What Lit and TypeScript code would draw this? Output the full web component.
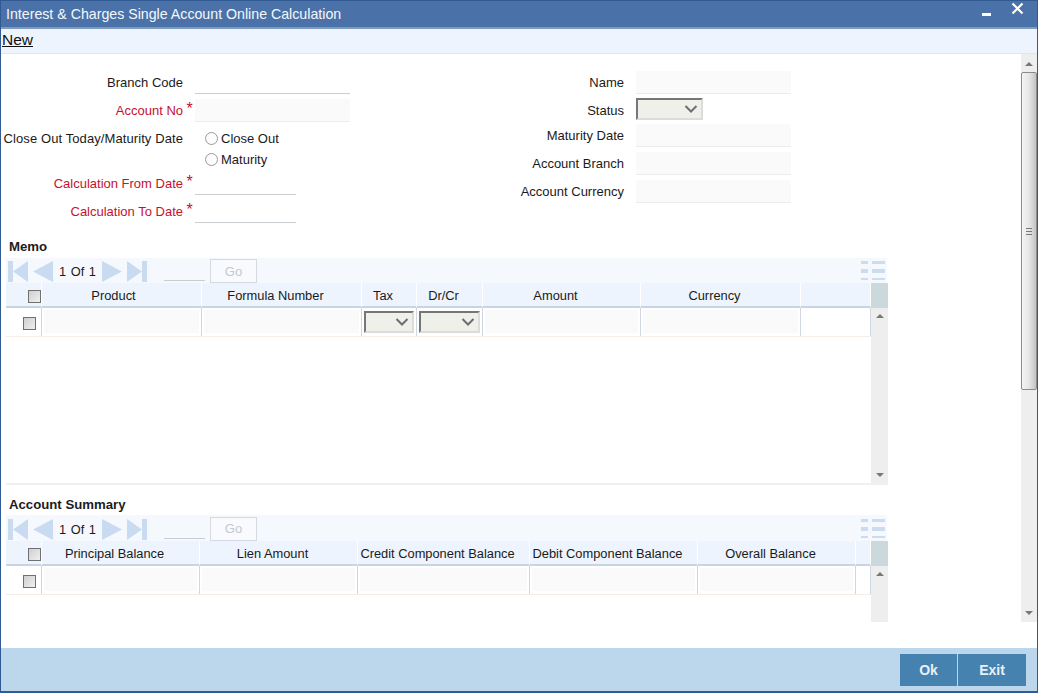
import { LitElement, html, css, svg } from "lit";
import { customElement } from "lit/decorators.js";
import { classMap } from "lit/directives/class-map.js";

type Col = { w: number; label: string; kind: "input" | "select" | "none"; shift?: boolean };

const memoCols: Col[] = [
  { w: 160, label: "Product", kind: "input", shift: true },
  { w: 160, label: "Formula Number", kind: "input" },
  { w: 55, label: "Tax", kind: "select" },
  { w: 66, label: "Dr/Cr", kind: "select" },
  { w: 158, label: "Amount", kind: "input" },
  { w: 160, label: "Currency", kind: "input" },
  { w: 70, label: "", kind: "none" },
];
const summaryCols: Col[] = [
  { w: 158, label: "Principal Balance", kind: "input" },
  { w: 158, label: "Lien Amount", kind: "input" },
  { w: 172, label: "Credit Component Balance", kind: "input" },
  { w: 168, label: "Debit Component Balance", kind: "input" },
  { w: 158, label: "Overall Balance", kind: "input" },
  { w: 15, label: "", kind: "none" },
];

const chevron = html`<svg class="chev" width="14" height="8" viewBox="0 0 14 8"><path d="M1.5 1 L7 6.5 L12.5 1" fill="none" stroke="#6e6e6e" stroke-width="2"/></svg>`;
const arrowUp = svg`<path d="M0 4 L4 0 L8 4 Z" fill="#777"/>`;
const arrowDown = svg`<path d="M0 0 L8 0 L4 4 Z" fill="#777"/>`;

@customElement("app-root")
export class AppRoot extends LitElement {
  static styles = css`
    :host { display: block; height: 100vh; font-family: "Liberation Sans", Arial, sans-serif; font-size: 13px; color: #1a1a1a; }
    * { box-sizing: border-box; }
    .window { height: 693px; display: flex; flex-direction: column; border-left: 1px solid #2f5a94; border-right: 1px solid #2f5a94; border-bottom: 2px solid #2f5a94; border-top: 1px solid #2f5a94; background: #fff; overflow: hidden; }
    .title { height: 28px; flex: none; background: #4a72a8; border-bottom: 2px solid #7f9cbd; color: #fff; display: flex; align-items: center; justify-content: space-between; padding: 0 13px 0 5px; }
    .title .text { color: #f4f7fb; font-size: 14.2px; padding-bottom: 1px; }
    .wctl { display: flex; align-items: flex-start; gap: 19px; margin-top: -8px; }
    .toolbar { height: 25px; flex: none; background: #edf4fd; border-bottom: 1px solid #e2e6ea; display: flex; align-items: center; font-size: 15.5px; padding: 0 0 3px 1px; }
    .toolbar a { color: #111; text-decoration: underline; }
    .content { height: 568px; flex: none; display: flex; overflow: hidden; }
    .main { flex: 1; min-width: 0; overflow: hidden; }
    .spacer { flex: 1; }
    .footer { height: 43px; flex: none; background: #bcd7ec; display: flex; justify-content: flex-end; padding: 6px 11px 5px 0; gap: 1px; }
    .btn { background: #4682b0; color: #e9f0f5; font-weight: bold; font-size: 14px; display: flex; align-items: center; justify-content: center; }
    .btn.ok { width: 57px; }
    .btn.exit { width: 68px; }

    .vscroll { width: 16px; flex: none; background: #eeeeee; display: flex; flex-direction: column; align-items: center; }
    .vscroll .up { height: 18px; display: flex; align-items: center; justify-content: center; flex: none; padding-top: 2px; }
    .vscroll .thumb { width: 16px; height: 318px; flex: none; border: 1px solid #8b8b8b; border-radius: 2px; background: linear-gradient(90deg, #f4f4f4, #e6e6e6 50%, #c4c4c4); display: flex; align-items: center; justify-content: center; }
    .grip { width: 6px; height: 7px; border-top: 1px solid #777; border-bottom: 1px solid #777; position: relative; }
    .grip::after { content: ""; position: absolute; left: 0; right: 0; top: 2px; height: 1px; background: #777; }
    .vscroll .dn { margin-top: auto; height: 18px; display: flex; align-items: center; justify-content: center; flex: none; }

    .form { display: flex; height: 182px; padding-top: 17px; }
    .col-left { width: 500px; flex: none; display: flex; flex-direction: column; }
    .col-right { width: 400px; flex: none; display: flex; flex-direction: column; }
    .row { display: flex; align-items: center; height: 22px; flex: none; }
    .lbl { text-align: right; white-space: nowrap; flex: none; }
    .lbl.wide { letter-spacing: 0.09px; }
    .lbl.nudge { padding-top: 2px; }
    .col-left .lbl { width: 182px; }
    .col-right .lbl { width: 123px; }
    .req { color: #c8102e; }
    .star { width: 12px; flex: none; color: #c8102e; font-size: 16px; text-align: center; line-height: 14px; margin-top: -3px; padding-left: 1px; }
    .gap { width: 12px; flex: none; }
    .in { height: 23px; flex: none; }
    .underline { border-bottom: 1px solid #c9ced3; }
    .filled { background: #fafafa; border-bottom: 1px solid #ececec; }
    .w155 { width: 155px; }
    .w101 { width: 101px; }
    .mt6 { margin-top: 6px; }
    .mt5 { margin-top: 5px; }
    .mt4 { margin-top: 4px; }
    .mt2 { margin-top: 2px; }
    .mtn1 { margin-top: -1px; }
    .radio { display: flex; align-items: center; gap: 3px; padding-left: 10px; height: 21px; }
    .radio .dot { width: 13px; height: 13px; border-radius: 50%; background: #fdfdfd; border: 1px solid #9a9a9a; flex: none; }
    .spacer-l { width: 194px; flex: none; }

    .select { height: 22px; flex: none; background: #f0f0eb; border-top: 2px solid #767676; border-left: 2px solid #767676; border-right: 2px solid #dcdcdc; border-bottom: 2px solid #dcdcdc; display: flex; align-items: center; justify-content: flex-end; padding-right: 3px; }
    .select.status { width: 67px; }
    .chev { display: block; }

    .section { margin-left: 5px; width: 882px; }
    .sec-title { font-weight: bold; font-size: 13.2px; height: 22px; display: flex; align-items: center; padding: 0 0 2px 3px; color: #1c1c1c; }
    .second .sec-title { padding-bottom: 0; }
    .pager { height: 25px; width: 881px; background: #f5f9fe; display: flex; align-items: center; padding: 1px 0 0 2px; }
    .second .pager { height: 26px; }
    .pager svg.nav { display: block; flex: none; margin-top: 1px; }
    .navgap { width: 4px; flex: none; }
    .pager .count { width: 47px; text-align: center; font-size: 12.8px; flex: none; word-spacing: 1px; padding-top: 1px; }
    .pager .pg-in { width: 41px; height: 15px; border-bottom: 1px solid #c9ced3; margin-left: 17px; flex: none; align-self: flex-end; margin-bottom: 2px; }
    .pager .go { width: 47px; height: 24px; margin-left: 5px; border: 1px solid #d3dae2; background: #f8fafd; color: #c3c9d0; font-size: 13px; display: flex; align-items: center; justify-content: center; flex: none; }
    .pager .list { margin-left: auto; margin-right: 2px; display: block; flex: none; margin-top: -1px; }

    .tablewrap { display: flex; width: 882px; height: 100%; }
    .table { width: 865px; flex: none; }
    .hrow, .drow { display: grid; }
    .hrow { height: 25px; font-size: 12.85px; }
    .hcell { background: #edf4fd; border-right: 1px solid #fff; border-bottom: 2px solid #c9d4e2; display: flex; align-items: center; justify-content: center; padding: 1px 12px 0 0; white-space: nowrap; }
    .hcell.shift { padding-right: 16px; }
    .hcell.check { padding: 3px 0 0 22px; justify-content: flex-start; }
    .drow { height: 29px; border-bottom: 1px solid #f6ede6; }
    .dcell { border-right: 1px solid #cfd8e2; padding: 2px 2px 3px 2px; display: flex; }
    .dcell.check { padding: 2px 0 0 17px; align-items: center; }
    .dcell .fill { flex: 1; background: #fafafa; }
    .dcell .select { flex: 1; height: 22px; margin: 1px 0 0 0; }
    .cb { width: 13px; height: 13px; border: 1px solid #707070; background: linear-gradient(135deg, #cfcfcf, #f0f0f0); }
    .memo-body { height: 202px; border-bottom: 2px solid #f0f0f0; width: 882px; }
    .summary-body { height: 120px; }
    .sbar { width: 17px; flex: none; display: flex; flex-direction: column; }
    .sbar .head { height: 25px; background: #cbd9dd; flex: none; }
    .sbar .track { flex: 1; background: #eeeeee; display: flex; flex-direction: column; align-items: center; justify-content: space-between; padding: 6px 0 6px; }
    .second { margin-top: 8px; }
  `;

  private nav(dir: "first" | "prev" | "next" | "last") {
    const c = "#c9dbf0";
    const shapes = {
      first: html`<svg class="nav" width="21" height="21" viewBox="0 0 21 21"><rect x="0" y="0" width="5" height="21" fill="${c}"/><path d="M20 0 V21 L5 10.5 Z" fill="${c}"/></svg>`,
      prev: html`<svg class="nav" width="21" height="21" viewBox="0 0 21 21"><path d="M20 0 V21 L0 10.5 Z" fill="${c}"/></svg>`,
      next: html`<svg class="nav" width="21" height="21" viewBox="0 0 21 21"><path d="M1 0 V21 L21 10.5 Z" fill="${c}"/></svg>`,
      last: html`<svg class="nav" width="21" height="21" viewBox="0 0 21 21"><path d="M1 0 V21 L16 10.5 Z" fill="${c}"/><rect x="16" y="0" width="5" height="21" fill="${c}"/></svg>`,
    };
    return shapes[dir];
  }

  private pager() {
    const c = "#cbdcf0";
    return html`<div class="pager">
      ${this.nav("first")}<span class="navgap"></span>${this.nav("prev")}
      <span class="count">1 Of 1</span>
      ${this.nav("next")}<span class="navgap"></span>${this.nav("last")}
      <span class="pg-in"></span>
      <span class="go">Go</span>
      <svg class="list" width="24" height="19" viewBox="0 0 24 19">
        <rect x="0" y="0" width="7" height="3" fill="${c}"/><rect x="11" y="0" width="13" height="3" fill="${c}"/>
        <rect x="0" y="8" width="7" height="4" fill="${c}"/><rect x="11" y="8" width="13" height="4" fill="${c}"/>
        <rect x="0" y="17" width="7" height="2" fill="${c}"/><rect x="11" y="17" width="13" height="2" fill="${c}"/>
      </svg>
    </div>`;
  }

  private table(cols: Col[]) {
    const tpl = "36px " + cols.map((c) => c.w + "px").join(" ");
    return html`<div class="tablewrap">
      <div class="table">
        <div class="hrow" style="grid-template-columns:${tpl}">
          <div class="hcell check"><div class="cb"></div></div>
          ${cols.map((c) => html`<div class=${classMap({ hcell: true, shift: !!c.shift })}>${c.label}</div>`)}
        </div>
        <div class="drow" style="grid-template-columns:${tpl}">
          <div class="dcell check"><div class="cb"></div></div>
          ${cols.map((c) => html`<div class="dcell">
            ${c.kind === "input" ? html`<div class="fill"></div>` : c.kind === "select" ? html`<div class="select">${chevron}</div>` : ""}
          </div>`)}
        </div>
      </div>
      <div class="sbar">
        <div class="head"></div>
        <div class="track">
          <svg width="8" height="4" viewBox="0 0 8 4">${arrowUp}</svg>
          <svg width="8" height="4" viewBox="0 0 8 4">${arrowDown}</svg>
        </div>
      </div>
    </div>`;
  }

  render() {
    return html`<div class="window">
      <div class="title">
        <span class="text">Interest &amp; Charges Single Account Online Calculation</span>
        <span class="wctl">
          <svg width="10" height="16" viewBox="0 0 10 16"><rect x="0" y="11" width="9" height="3" fill="#fff"/></svg>
          <svg width="13" height="16" viewBox="0 0 13 16"><path d="M1.5 1.5 L11.5 11.5 M11.5 1.5 L1.5 11.5" stroke="#fff" stroke-width="2.2" fill="none"/></svg>
        </span>
      </div>
      <div class="toolbar"><a>New</a></div>
      <div class="content">
        <div class="main">
          <div class="form">
            <div class="col-left">
              <div class="row"><span class="lbl">Branch Code</span><span class="gap"></span><div class="in underline w155"></div></div>
              <div class="row mt6"><span class="lbl req">Account No</span><span class="star">*</span><div class="in filled w155"></div></div>
              <div class="row mt6"><span class="lbl wide">Close Out Today/Maturity Date</span><span class="gap"></span><label class="radio"><span class="dot"></span>Close Out</label></div>
              <div class="row mtn1"><span class="spacer-l"></span><label class="radio"><span class="dot"></span>Maturity</label></div>
              <div class="row mt2"><span class="lbl req">Calculation From Date</span><span class="star">*</span><div class="in underline w101"></div></div>
              <div class="row mt6"><span class="lbl req">Calculation To Date</span><span class="star">*</span><div class="in underline w101"></div></div>
            </div>
            <div class="col-right">
              <div class="row"><span class="lbl">Name</span><span class="gap"></span><div class="in filled w155"></div></div>
              <div class="row mt5"><span class="lbl nudge">Status</span><span class="gap"></span><div class="select status">${chevron}</div></div>
              <div class="row mt4"><span class="lbl">Maturity Date</span><span class="gap"></span><div class="in filled w155"></div></div>
              <div class="row mt6"><span class="lbl">Account Branch</span><span class="gap"></span><div class="in filled w155"></div></div>
              <div class="row mt6"><span class="lbl">Account Currency</span><span class="gap"></span><div class="in filled w155"></div></div>
            </div>
          </div>
          <div class="section">
            <div class="sec-title">Memo</div>
            ${this.pager()}
            <div class="memo-body">${this.table(memoCols)}</div>
          </div>
          <div class="section second">
            <div class="sec-title">Account Summary</div>
            ${this.pager()}
            <div class="summary-body">${this.table(summaryCols)}</div>
          </div>
        </div>
        <div class="vscroll">
          <div class="up"><svg width="8" height="4" viewBox="0 0 8 4">${arrowUp}</svg></div>
          <div class="thumb"><div class="grip"></div></div>
          <div class="dn"><svg width="8" height="4" viewBox="0 0 8 4">${arrowDown}</svg></div>
        </div>
      </div>
      <div class="spacer"></div>
      <div class="footer"><div class="btn ok">Ok</div><div class="btn exit">Exit</div></div>
    </div>`;
  }
}
